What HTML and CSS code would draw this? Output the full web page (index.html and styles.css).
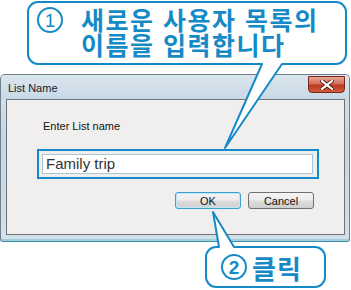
FILE: index.html
```html
<!DOCTYPE html>
<html lang="ko">
<head>
    <meta charset="UTF-8" />
    <title>List Name</title>
    <link rel="stylesheet" href="styles.css">
</head>
<body>
    <div class="stage">

        <div class="window">
            <div class="titlebar">
                <span class="title">List Name</span>
                <span class="close-btn">
                    <svg width="14" height="10" viewBox="0 0 14 10">
                        <path d="M2 1 L12 9 M12 1 L2 9" stroke="#5a1a10" stroke-width="4" stroke-linecap="square" />
                        <path d="M2 1 L12 9 M12 1 L2 9" stroke="#fff" stroke-width="2.2" stroke-linecap="square" />
                    </svg>
                </span>
            </div>
            <div class="client">
                <div class="label">Enter List name</div>
                <div class="field-mark">
                    <div class="textbox">Family trip</div>
                </div>
                <div class="buttons">
                    <span class="btn btn-default">OK</span>
                    <span class="btn">Cancel</span>
                </div>
            </div>
        </div>

        <!-- выноски поверх окна -->
        <svg class="bubbles" width="351" height="290" viewBox="0 0 351 290">
            <path d="M38 2 H336 A10 10 0 0 1 346 12 V54 A10 10 0 0 1 336 64 H282 L225 148 L262 64 H38 A10 10 0 0 1 28 54 V12 A10 10 0 0 1 38 2 Z" />
            <path d="M216 247 H219 L213 212 L234 247 H315 A10 10 0 0 1 325 257 V277 A10 10 0 0 1 315 287 H216 A10 10 0 0 1 206 277 V257 A10 10 0 0 1 216 247 Z" />
        </svg>

        <div class="note note-top">
            <span class="num num-thin">1</span>
            <div class="note-text">
                <div class="note-line">새로운 사용자 목록의</div>
                <div class="note-line">이름을 입력합니다</div>
            </div>
        </div>

        <div class="note note-bottom">
            <span class="num num-bold">2</span>
            <div class="note-text note-big">클릭</div>
        </div>

    </div>
</body>
</html>
```

FILE: styles.css
```css
:root {
    --blue: #168ac6;
    --client: #f0efed;
}

* {
    box-sizing: border-box;
}

body {
    margin: 0;
    background: #fff;
    font-family: 'Liberation Sans', Arial, sans-serif;
    color: #000;
}

.stage {
    position: relative;
    width: 351px;
    height: 290px;
    overflow: hidden;
    padding-top: 74px;
}

.window {
    width: 350px;
    height: 168px;
    display: flex;
    flex-direction: column;
    background: linear-gradient(#d6e3ec, #c6d7e4 40%, #d2e0ea);
    border: 1px solid #6f7f8c;
    border-bottom-color: #3f8ea8;
    border-radius: 5px 5px 3px 3px;
    box-shadow: inset 0 -2px 0 #9fd0dc;
}

.titlebar {
    height: 24px;
    display: flex;
    justify-content: space-between;
    align-items: flex-start;
    padding-left: 7px;
    background: linear-gradient(#dbe6ee, #c8d9e6);
    border-radius: 4px 4px 0 0;
}

.title {
    font-size: 11px;
    line-height: 13px;
    margin-top: 7px;
    color: #1a1a1a;
}

.close-btn {
    width: 37px;
    height: 17px;
    margin: 1px 4px 0 0;
    display: flex;
    align-items: center;
    justify-content: center;
    border: 1px solid #7a2618;
    border-radius: 0 0 4px 4px;
    background: linear-gradient(#e6a898, #d46e58 45%, #bc3a22 55%, #d05a3e);
}

.client {
    flex: 1;
    margin: 0 4px 6px 5px;
    background: var(--client);
    border: 1px solid #6e7378;
    padding: 20px 0 0 30px;
}

.label {
    font-size: 11px;
    line-height: 13px;
    margin-left: 6px;
    color: #111;
}

.field-mark {
    width: 282px;
    margin-top: 16px;
    padding: 3px 4px 3px 3px;
    border: 2px solid var(--blue);
}

.textbox {
    height: 20px;
    background: #fff;
    border: 1px solid #a9c6d6;
    padding-left: 3px;
    font-size: 15px;
    line-height: 18px;
    color: #333;
}

.buttons {
    display: flex;
    justify-content: flex-end;
    gap: 7px;
    margin: 13px 30px 0 0;
}

.btn {
    width: 66px;
    height: 17px;
    display: flex;
    align-items: center;
    justify-content: center;
    font-size: 11px;
    color: #111;
    border: 1px solid #707070;
    border-radius: 3px;
    background: linear-gradient(#f4f4f4, #ececec 48%, #dddddd 52%, #cfcfcf);
}

.btn-default {
    border-color: #3aa0cc;
    box-shadow: inset 0 0 0 1px #bfe6f5;
}

.bubbles {
    position: absolute;
    left: 0;
    top: 0;
}

    .bubbles path {
        fill: #fff;
        stroke: var(--blue);
        stroke-width: 2;
        stroke-linejoin: round;
    }

.note {
    position: absolute;
    display: flex;
    align-items: flex-start;
    color: var(--blue);
    font-family: 'Noto Sans CJK KR', 'Noto Sans', sans-serif;
    font-weight: 700;
}

.note-top {
    left: 28px;
    top: 2px;
    width: 318px;
    height: 62px;
    padding: 5px 0 0 9px;
    gap: 18px;
}

.note-bottom {
    left: 206px;
    top: 247px;
    width: 119px;
    height: 40px;
    padding: 0 0 0 15px;
    align-items: center;
    gap: 5px;
}

.note-text {
    font-size: 25px;
    line-height: 25px;
    letter-spacing: 1.5px;
    white-space: nowrap;
}

.note-line {
    height: 25px;
}

.note-big {
    font-size: 26px;
    letter-spacing: 1px;
}

.num {
    width: 26px;
    height: 26px;
    flex: none;
    border-radius: 50%;
    display: flex;
    align-items: center;
    justify-content: center;
    font-family: 'Liberation Sans', Arial, sans-serif;
    font-size: 19px;
    line-height: 1;
}

.num-thin {
    border: 2px solid var(--blue);
    font-weight: 400;
}

.num-bold {
    border: 2.5px solid var(--blue);
    font-weight: 700;
}
```
